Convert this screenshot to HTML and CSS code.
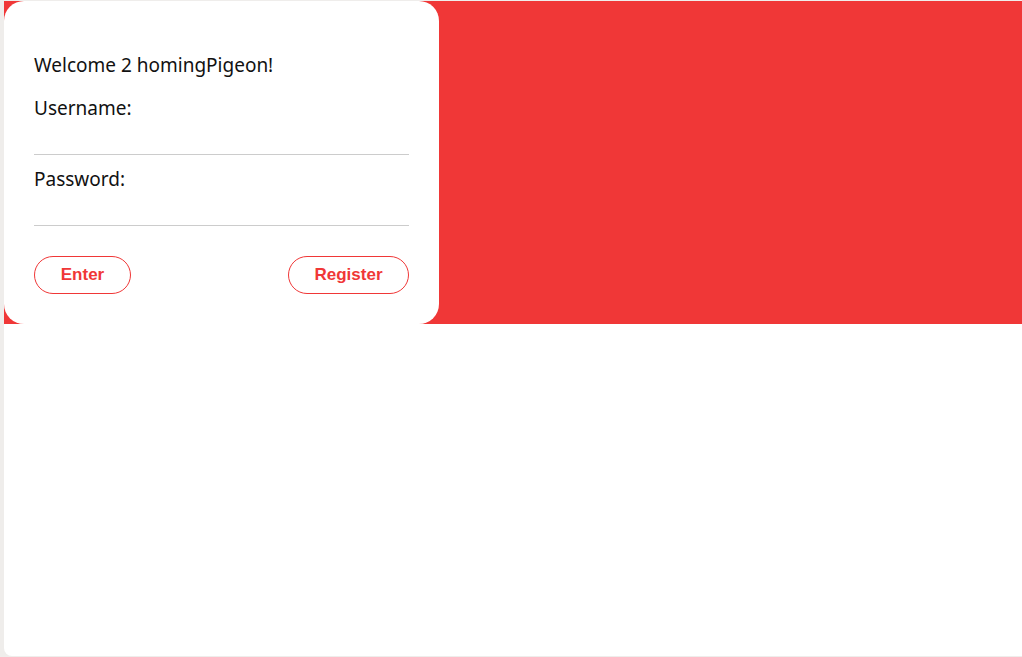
FILE: index.html
```html
<!DOCTYPE html>
<html>
<head>
<meta charset="utf-8">
<link rel="stylesheet" href="styles.css">
</head>
<body>
<div class="window">
  <div class="hero">
    <form class="card">
      <div class="title">Welcome 2 homingPigeon!</div>
      <label class="label">Username:</label>
      <input class="field" type="text">
      <label class="label">Password:</label>
      <input class="field" type="password">
      <div class="actions">
        <button type="button" class="btn btn-enter">Enter</button>
        <button type="button" class="btn btn-register">Register</button>
      </div>
    </form>
  </div>
</div>
</body>
</html>
```
FILE: styles.css
```css
html, body {
  margin: 0;
  padding: 0;
  height: 100%;
}
body {
  background: #efedeb;
  overflow: hidden;
}
.window {
  margin: 1px 0 0 4px;
  height: 655px;
  background: #ffffff;
  border-bottom-left-radius: 8px;
  overflow: hidden;
}
.hero {
  background: #f03737;
  height: 323px;
}
.card {
  box-sizing: border-box;
  width: 435px;
  height: 323px;
  background: #ffffff;
  border-radius: 20px;
  padding: 51px 30px 30px;
  display: flex;
  flex-direction: column;
  font-family: "Noto Sans", sans-serif;
  color: #111;
}
.title {
  font-size: 19px;
  line-height: 26px;
  margin-bottom: 17px;
}
.label {
  font-size: 19px;
  line-height: 26px;
}
.field {
  display: block;
  box-sizing: border-box;
  width: 100%;
  height: 34px;
  border: none;
  border-bottom: 1px solid #cccccc;
  outline: none;
  background: transparent;
  margin: 0 0 11px;
  padding: 0;
  font-size: 16px;
}
.actions {
  display: flex;
  justify-content: space-between;
  margin-top: 19px;
}
.btn {
  height: 38px;
  border: 1px solid #f03737;
  border-radius: 19px;
  background: #ffffff;
  color: #f03737;
  font-family: "Liberation Sans", Arial, sans-serif;
  font-weight: bold;
  font-size: 17px;
  padding: 0;
  cursor: pointer;
}
.btn-enter {
  width: 97px;
}
.btn-register {
  width: 121px;
}
```
